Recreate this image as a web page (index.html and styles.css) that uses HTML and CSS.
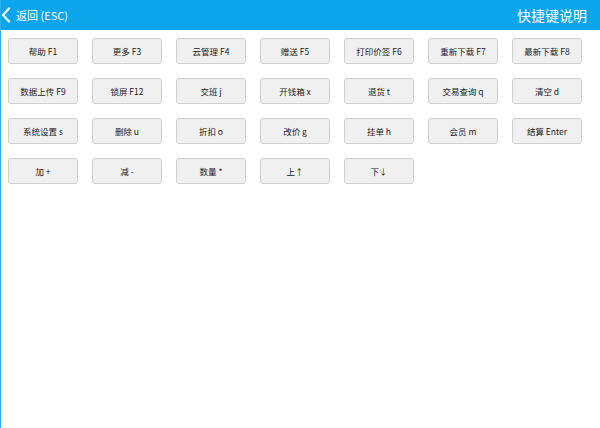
FILE: index.html
```html
<!DOCTYPE html>
<html lang="zh-CN">
<head>
<meta charset="utf-8">
<title>快捷键说明</title>
<link rel="stylesheet" href="styles.css">
</head>
<body>
<div class="page">
  <header class="topbar">
    <div class="back">
      <svg class="chev" width="10" height="16" viewBox="0 0 10 16"><path d="M8 1.5 L2 8 L8 14.5" fill="none" stroke="#fff" stroke-width="2.2" stroke-linecap="round" stroke-linejoin="round"/></svg>
      <span class="back-text">返回 (ESC)</span>
    </div>
    <div class="title">快捷键说明</div>
  </header>
  <main class="keys">
    <div class="key">帮助 F1</div>
    <div class="key">更多 F3</div>
    <div class="key">云管理 F4</div>
    <div class="key">赠送 F5</div>
    <div class="key">打印价签 F6</div>
    <div class="key">重新下载 F7</div>
    <div class="key">最新下载 F8</div>
    <div class="key">数据上传 F9</div>
    <div class="key">锁屏 F12</div>
    <div class="key">交班 j</div>
    <div class="key">开钱箱 x</div>
    <div class="key">退货 t</div>
    <div class="key">交易查询 q</div>
    <div class="key">清空 d</div>
    <div class="key">系统设置 s</div>
    <div class="key">删除 u</div>
    <div class="key">折扣 o</div>
    <div class="key">改价 g</div>
    <div class="key">挂单 h</div>
    <div class="key">会员 m</div>
    <div class="key">结算 Enter</div>
    <div class="key">加 +</div>
    <div class="key">减 -</div>
    <div class="key">数量 *</div>
    <div class="key">上↑</div>
    <div class="key">下↓</div>
  </main>
</div>
</body>
</html>
```
FILE: styles.css
```css
html, body {
  margin: 0;
  padding: 0;
  background: #fff;
}
body {
  font-family: "Noto Sans CJK SC", "Noto Sans", sans-serif;
}
.page {
  width: 600px;
  height: 428px;
  box-sizing: border-box;
  border-left: 1px solid #2aaeea;
  overflow: hidden;
}
.topbar {
  height: 30px;
  background: #0aa5ea;
  display: flex;
  align-items: center;
  justify-content: space-between;
  padding: 0 13px 0 1px;
  margin-left: -1px;
  color: #fff;
}
.back {
  display: flex;
  align-items: center;
  gap: 5px;
}
.chev {
  display: block;
}
.back-text {
  font-size: 11px;
  line-height: 1;
}
.title {
  font-size: 14px;
  line-height: 1;
}
.keys {
  display: grid;
  grid-template-columns: repeat(7, 70px);
  grid-auto-rows: 26px;
  column-gap: 14px;
  row-gap: 14px;
  padding: 8px 0 0 7px;
}
.key {
  box-sizing: border-box;
  border: 1px solid #cfcfcf;
  border-radius: 3px;
  background: #f0f0f0;
  color: #222;
  font-size: 8.5px;
  display: flex;
  align-items: center;
  justify-content: center;
  white-space: nowrap;
}
```
